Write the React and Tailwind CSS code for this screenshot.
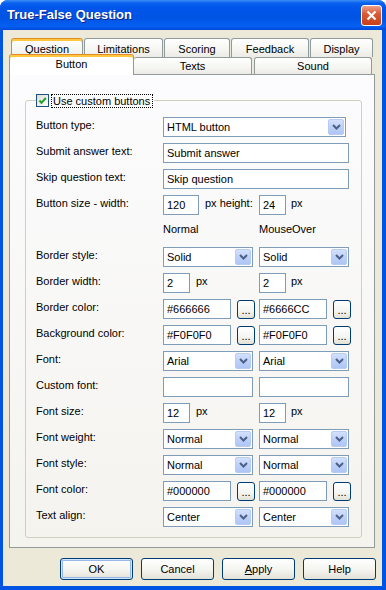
function Arrow() {
  return (
    <span className="ml-auto mr-[1px] flex h-[16px] w-[16px] items-center justify-center rounded-[2px] border border-[#B7CBF7] bg-[linear-gradient(180deg,#D3E0FD,#BACEF8_60%,#AFC6F6)]">
      <svg width="9" height="6" viewBox="0 0 9 6">
        <path d="M1 1 L4.5 4.5 L8 1" fill="none" stroke="#4D6185" strokeWidth="2" />
      </svg>
    </span>
  )
}

function Select({ value, w }) {
  return (
    <div className={`flex h-[20px] shrink-0 items-center border border-[#7F9DB9] bg-white pl-[3px] ${w}`}>
      <span className="leading-[18px]">{value}</span>
      <Arrow />
    </div>
  )
}

function Field({ value, w }) {
  return (
    <div className={`h-[20px] shrink-0 border border-[#7F9DB9] bg-white pl-[3px] leading-[18px] ${w}`}>
      {value}
    </div>
  )
}

function Dots() {
  return (
    <div className="ml-[6px] mt-[1px] flex h-[19px] w-[18px] shrink-0 items-center justify-center rounded-[3px] border border-[#003C74] bg-[linear-gradient(180deg,#FFFFFF,#F4F4F0_60%,#E3E1D7)] leading-[14px]">
      ...
    </div>
  )
}

function Px({ ml }) {
  return <span className={`leading-[16px] ${ml}`}>px</span>
}

function Row({ label, children }) {
  return (
    <div className="flex h-[20px]">
      <div className="w-[127px] shrink-0 leading-[16px]">{label}</div>
      {children}
    </div>
  )
}

function Pair({ left, right }) {
  return (
    <>
      <div className="flex w-[96px] shrink-0 items-start">{left}</div>
      <div className="flex items-start">{right}</div>
    </>
  )
}

const tabBase =
  'h-[19px] shrink-0 rounded-t-[3px] border border-b-0 border-[#919B9C] bg-[linear-gradient(180deg,#FFFFFF,#F5F5F1_60%,#ECEBE6)] text-center'

export default function App() {
  return (
    <div className="flex h-[590px] w-[386px] flex-col rounded-t-[8px] bg-[#0054E3] font-['Liberation_Sans',Arial,sans-serif] text-[11px] text-black">
      {/* title bar */}
      <div className="flex h-[30px] shrink-0 items-center rounded-t-[8px] bg-[linear-gradient(180deg,#3D8DF5_0%,#0A62EF_10%,#0055EA_25%,#0054E3_60%,#0560F2_88%,#0048D8_100%)] pl-[7px]">
        <span className="text-[13px] font-bold text-white [text-shadow:1px_1px_0_#0A1E8C]">
          True-False Question
        </span>
        <div className="ml-auto mr-[4px] flex h-[21px] w-[21px] items-center justify-center rounded-[3px] border border-white bg-[linear-gradient(180deg,#EBA18A,#DA5B34_40%,#C73F1A)]">
          <svg width="11" height="11" viewBox="0 0 11 11">
            <path d="M1.5 1.5 L9.5 9.5 M9.5 1.5 L1.5 9.5" stroke="white" strokeWidth="2.2" />
          </svg>
        </div>
      </div>

      {/* body */}
      <div className="mb-[4px] ml-[3px] mr-[4px] flex flex-1 flex-col bg-[#ECE9D8] pl-[6px] pt-[8px]">
        {/* tab row 1 */}
        <div className="flex h-[16px] items-start">
          <div className={`${tabBase} ml-[2px] w-[72px] border-t-[#E68B2C] pt-[2px] leading-[16px] shadow-[inset_0_2px_0_#FFC73C]`}>
            Question
          </div>
          <div className={`${tabBase} ml-[1px] w-[79px] pt-[2px] leading-[16px]`}>Limitations</div>
          <div className={`${tabBase} ml-[1px] w-[66px] pt-[2px] leading-[16px]`}>Scoring</div>
          <div className={`${tabBase} ml-[1px] w-[78px] pt-[2px] leading-[16px]`}>Feedback</div>
          <div className={`${tabBase} ml-[1px] w-[63px] pt-[2px] leading-[16px]`}>Display</div>
        </div>
        {/* tab row 2 */}
        <div className="relative z-10 flex h-[20px] items-start">
          <div className="h-[21px] w-[125px] shrink-0 rounded-t-[3px] border border-b-0 border-[#919B9C] border-t-[#E68B2C] bg-white pt-[1px] text-center leading-[16px] shadow-[inset_0_2px_0_#FFC73C]">
            Button
          </div>
          <div className="mt-[3px] h-[17px] w-[118px] shrink-0 rounded-t-[3px] border border-b-0 border-l-0 border-[#919B9C] bg-[linear-gradient(180deg,#FFFFFF,#F5F5F1_60%,#ECEBE6)] text-center leading-[16px]">
            Texts
          </div>
          <div className="ml-[2px] mt-[3px] h-[17px] w-[118px] shrink-0 rounded-t-[3px] border border-b-0 border-[#919B9C] bg-[linear-gradient(180deg,#FFFFFF,#F5F5F1_60%,#ECEBE6)] text-center leading-[16px]">
            Sound
          </div>
        </div>

        {/* tab page */}
        <div className="h-[474px] w-[366px] shrink-0 border border-[#919B9C] bg-[linear-gradient(180deg,#FCFCFE,#F4F3EE)] pt-[18px]">
          <fieldset className="ml-[15px] w-[335px] rounded-[3px] border border-[#D0D0BF] px-[10px] pb-[10px]">
            <legend className="pr-[1px]">
              <span className="flex h-[15px] items-center">
                <span className="flex h-[13px] w-[13px] items-center justify-center border border-[#1C5180] bg-[linear-gradient(135deg,#DCDCD7,#FFFFFF)]">
                  <svg width="11" height="11" viewBox="0 0 11 11">
                    <path d="M2.5 5.5 L4.5 7.8 L8.8 3" fill="none" stroke="#21A121" strokeWidth="2" />
                  </svg>
                </span>
                <span className="ml-[2px] h-[14px] border border-dotted border-black pl-[1px] pr-[2px] leading-[12px]">
                  Use custom buttons
                </span>
              </span>
            </legend>

            <div className="flex flex-col gap-[6px] pt-[9px]">
              <Row label="Button type:">
                <Select value="HTML button" w="w-[183px]" />
              </Row>
              <Row label="Submit answer text:">
                <Field value="Submit answer" w="w-[186px]" />
              </Row>
              <Row label="Skip question text:">
                <Field value="Skip question" w="w-[186px]" />
              </Row>
              <Row label="Button size - width:">
                <Pair
                  left={
                    <>
                      <Field value="120" w="w-[36px]" />
                      <span className="ml-[6px] leading-[16px]">px height:</span>
                    </>
                  }
                  right={
                    <>
                      <Field value="24" w="w-[27px]" />
                      <Px ml="ml-[5px]" />
                    </>
                  }
                />
              </Row>
              <Row label="">
                <Pair
                  left={<span className="leading-[16px]">Normal</span>}
                  right={<span className="leading-[16px]">MouseOver</span>}
                />
              </Row>
              <Row label="Border style:">
                <Pair left={<Select value="Solid" w="w-[90px]" />} right={<Select value="Solid" w="w-[90px]" />} />
              </Row>
              <Row label="Border width:">
                <Pair
                  left={
                    <>
                      <Field value="2" w="w-[27px]" />
                      <Px ml="ml-[6px]" />
                    </>
                  }
                  right={
                    <>
                      <Field value="2" w="w-[27px]" />
                      <Px ml="ml-[5px]" />
                    </>
                  }
                />
              </Row>
              <Row label="Border color:">
                <Pair
                  left={
                    <>
                      <Field value="#666666" w="w-[68px]" />
                      <Dots />
                    </>
                  }
                  right={
                    <>
                      <Field value="#6666CC" w="w-[68px]" />
                      <Dots />
                    </>
                  }
                />
              </Row>
              <Row label="Background color:">
                <Pair
                  left={
                    <>
                      <Field value="#F0F0F0" w="w-[68px]" />
                      <Dots />
                    </>
                  }
                  right={
                    <>
                      <Field value="#F0F0F0" w="w-[68px]" />
                      <Dots />
                    </>
                  }
                />
              </Row>
              <Row label="Font:">
                <Pair left={<Select value="Arial" w="w-[90px]" />} right={<Select value="Arial" w="w-[90px]" />} />
              </Row>
              <Row label="Custom font:">
                <Pair left={<Field value="" w="w-[90px]" />} right={<Field value="" w="w-[90px]" />} />
              </Row>
              <Row label="Font size:">
                <Pair
                  left={
                    <>
                      <Field value="12" w="w-[27px]" />
                      <Px ml="ml-[6px]" />
                    </>
                  }
                  right={
                    <>
                      <Field value="12" w="w-[27px]" />
                      <Px ml="ml-[5px]" />
                    </>
                  }
                />
              </Row>
              <Row label="Font weight:">
                <Pair left={<Select value="Normal" w="w-[90px]" />} right={<Select value="Normal" w="w-[90px]" />} />
              </Row>
              <Row label="Font style:">
                <Pair left={<Select value="Normal" w="w-[90px]" />} right={<Select value="Normal" w="w-[90px]" />} />
              </Row>
              <Row label="Font color:">
                <Pair
                  left={
                    <>
                      <Field value="#000000" w="w-[68px]" />
                      <Dots />
                    </>
                  }
                  right={
                    <>
                      <Field value="#000000" w="w-[68px]" />
                      <Dots />
                    </>
                  }
                />
              </Row>
              <Row label="Text align:">
                <Pair left={<Select value="Center" w="w-[90px]" />} right={<Select value="Center" w="w-[90px]" />} />
              </Row>
            </div>
          </fieldset>
        </div>

        {/* dialog buttons */}
        <div className="mt-[10px] flex justify-end gap-[8px] pr-[6px]">
          <button className="h-[22px] w-[73px] rounded-[3px] border border-[#003C74] bg-[linear-gradient(180deg,#FFFFFF,#F4F4F0_55%,#E3E1D7)] shadow-[inset_0_0_0_1px_#CEE7FF,inset_0_0_0_2px_#98B8EA]">
            OK
          </button>
          <button className="h-[22px] w-[73px] rounded-[3px] border border-[#003C74] bg-[linear-gradient(180deg,#FFFFFF,#F4F4F0_55%,#E3E1D7)]">
            Cancel
          </button>
          <button className="h-[22px] w-[73px] rounded-[3px] border border-[#003C74] bg-[linear-gradient(180deg,#FFFFFF,#F4F4F0_55%,#E3E1D7)]">
            <span className="underline">A</span>pply
          </button>
          <button className="h-[22px] w-[73px] rounded-[3px] border border-[#003C74] bg-[linear-gradient(180deg,#FFFFFF,#F4F4F0_55%,#E3E1D7)]">
            Help
          </button>
        </div>
      </div>
    </div>
  )
}
